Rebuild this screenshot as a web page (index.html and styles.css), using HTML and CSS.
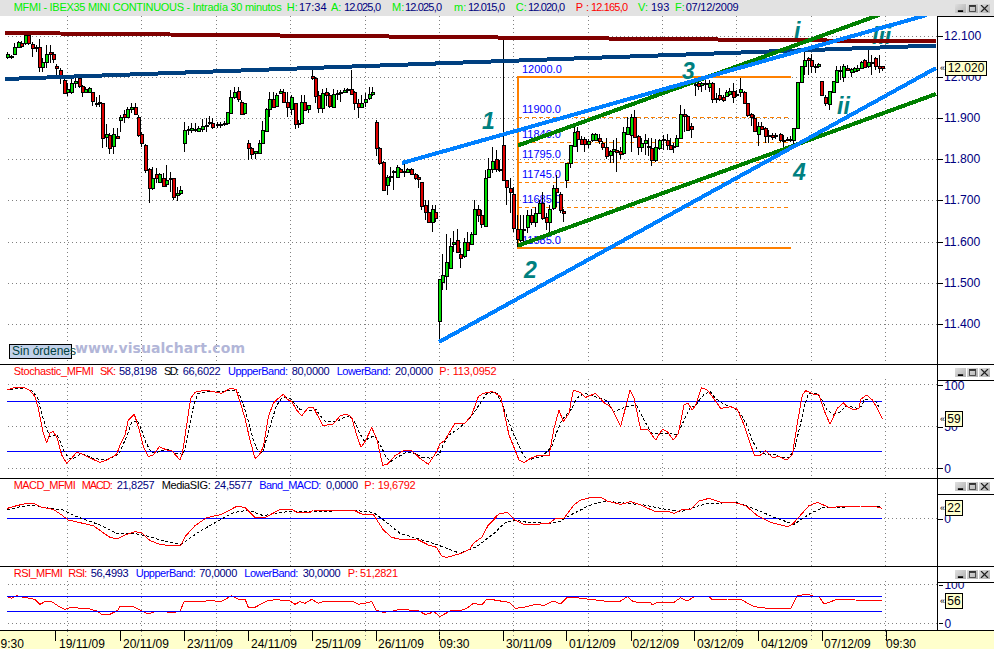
FILE: index.html
```html
<!DOCTYPE html>
<html lang="es">
<head>
<meta charset="utf-8">
<title>MFMI - IBEX35 MINI CONTINUOUS</title>
<link rel="stylesheet" href="styles.css">
</head>
<body>
<svg class="defs" width="0" height="0">
  <symbol id="i-min" viewBox="0 0 10 8"><rect x="2" y="6" width="6" height="2" fill="#000"/></symbol>
  <symbol id="i-max" viewBox="0 0 10 8"><path d="M1.5 1.5h7v6h-7z" fill="none" stroke="#333"/><rect x="1" y="0" width="8" height="2" fill="#333"/></symbol>
  <symbol id="i-close" viewBox="0 0 10 8"><path d="M1 0l8 8M9 0L1 8" stroke="#222" stroke-width="1.4" fill="none"/></symbol>
</svg>
<div class="window">

  <header class="titlebar">
    <svg class="titletext" width="950" height="16" viewBox="0 0 950 16">
      <text class="t11 c-lime" x="13.7" y="11" textLength="268">MFMI - IBEX35 MINI CONTINUOUS - Intradía 30 minutos</text>
      <text class="t11 c-lime" x="286.7" y="11">H:</text><text class="t11 c-navy" x="299" y="11">17:34</text>
      <text class="t11 c-lime" x="331" y="11">A:</text><text class="t11 c-navy" x="344" y="11" textLength="37">12.025,0</text>
      <text class="t11 c-lime" x="392" y="11">M:</text><text class="t11 c-navy" x="405" y="11" textLength="37">12.025,0</text>
      <text class="t11 c-lime" x="454" y="11">m:</text><text class="t11 c-navy" x="468" y="11" textLength="37">12.015,0</text>
      <text class="t11 c-lime" x="515.7" y="11">C:</text><text class="t11 c-navy" x="528" y="11" textLength="37">12.020,0</text>
      <text class="t11 c-red" x="575.7" y="11">P :</text><text class="t11 c-red" x="591" y="11" textLength="37">12.165,0</text>
      <text class="t11 c-lime" x="638" y="11">V:</text><text class="t11 c-navy" x="651" y="11">193</text>
      <text class="t11 c-lime" x="675" y="11">F:</text><text class="t11 c-navy" x="685.7" y="11" textLength="53">07/12/2009</text>
    </svg>
    <div class="wbs">
      <span class="wb"><svg class="ico"><use href="#i-min"/></svg></span>
      <span class="wb"><svg class="ico"><use href="#i-max"/></svg></span>
      <span class="wb"><svg class="ico"><use href="#i-close"/></svg></span>
    </div>
  </header>

  <section class="panel p-main">
    <svg class="plot" width="937" height="348" viewBox="0 16 937 348">
      <g id="grid-main"></g>
      <g id="fibo"></g>
      <g class="fibo-labels">
        <text x="522" y="72.5">12000.0</text>
        <text x="522" y="113.3">11900.0</text>
        <text x="522" y="138.3">11840.0</text>
        <text x="522" y="158.3">11795.0</text>
        <text x="522" y="178">11745.0</text>
        <text x="522" y="202.7">11685.0</text>
        <text x="522" y="244">11585.0</text>
      </g>
      <g id="candles"></g>
      <g class="waves">
        <text x="482" y="129">1</text>
        <text x="524" y="278">2</text>
        <text x="682" y="79">3</text>
        <text x="793" y="180">4</text>
        <text x="794" y="39">i</text>
        <text x="837" y="114">ii</text>
        <text x="872" y="44">iii</text>
      </g>
      <g id="trends"></g>
      <text class="watermark" x="75" y="353" textLength="170">www.visualchart.com</text>
    </svg>
    <div class="status">Sin órdenes</div>
    <aside class="axis axis-main">
      <svg class="scale" width="56" height="348" viewBox="938 17 56 347">
        <g class="scale-labels">
          <text x="944" y="40">12.100</text>
          <text x="944" y="81">12.000</text>
          <text x="944" y="122">11.900</text>
          <text x="944" y="163">11.800</text>
          <text x="944" y="204">11.700</text>
          <text x="944" y="246">11.600</text>
          <text x="944" y="287">11.500</text>
          <text x="944" y="328">11.400</text>
        </g>
        <g id="ticks-main"></g>
      </svg>
      <div class="tag tag-main"><i>«</i><b>12.020</b></div>
    </aside>
  </section>

  <section class="panel p-stoch">
    <svg class="plot" width="937" height="113" viewBox="0 365 937 113">
      <g id="grid-stoch"></g>
      <g id="lines-stoch"></g>
      <g class="t11">
        <text class="c-red" x="13.7" y="375" textLength="80">Stochastic_MFMI</text>
        <text class="c-red" x="100" y="375" textLength="16">SK:</text><text class="c-navy" x="119" y="375" textLength="38">58,8198</text>
        <text class="c-black" x="164" y="375" textLength="15">SD:</text><text class="c-navy" x="182.7" y="375" textLength="38">66,6022</text>
        <text class="c-blue" x="228" y="375" textLength="60">UppperBand:</text><text class="c-navy" x="291.7" y="375" textLength="38">80,0000</text>
        <text class="c-blue" x="336.7" y="375" textLength="54">LowerBand:</text><text class="c-navy" x="395" y="375" textLength="38">20,0000</text>
        <text class="c-red" x="439.3" y="375">P:</text><text class="c-red" x="452.7" y="375" textLength="44">113,0952</text>
      </g>
    </svg>
    <aside class="axis axis-sub">
      <div class="wbs">
        <span class="wb"><svg class="ico"><use href="#i-min"/></svg></span>
        <span class="wb"><svg class="ico"><use href="#i-max"/></svg></span>
        <span class="wb"><svg class="ico"><use href="#i-close"/></svg></span>
      </div>
      <svg class="scale" width="56" height="98" viewBox="938 380 56 98">
        <g class="scale-labels">
          <text x="944" y="389">100</text>
          <text x="944" y="430.5">50</text>
          <text x="944" y="472.5">0</text>
        </g>
        <g id="ticks-stoch"></g>
      </svg>
      <div class="tag tag-stoch"><i>«</i><b>59</b></div>
    </aside>
  </section>

  <section class="panel p-macd">
    <svg class="plot" width="937" height="87" viewBox="0 479 937 87">
      <g id="grid-macd"></g>
      <g id="lines-macd"></g>
      <g class="t11">
        <text class="c-red" x="13.7" y="489" textLength="62">MACD_MFMI</text>
        <text class="c-red" x="81.7" y="489" textLength="31">MACD:</text><text class="c-navy" x="116.7" y="489" textLength="38">21,8257</text>
        <text class="c-black" x="161.7" y="489" textLength="49">MediaSIG:</text><text class="c-navy" x="214.3" y="489" textLength="38">24,5577</text>
        <text class="c-blue" x="259.3" y="489" textLength="62">Band_MACD:</text><text class="c-navy" x="326" y="489" textLength="32">0,0000</text>
        <text class="c-red" x="364.3" y="489">P:</text><text class="c-red" x="377.7" y="489" textLength="38">19,6792</text>
      </g>
    </svg>
    <aside class="axis axis-sub">
      <div class="wbs">
        <span class="wb"><svg class="ico"><use href="#i-min"/></svg></span>
        <span class="wb"><svg class="ico"><use href="#i-max"/></svg></span>
        <span class="wb"><svg class="ico"><use href="#i-close"/></svg></span>
      </div>
      <svg class="scale" width="56" height="72" viewBox="938 494 56 72">
        <g class="scale-labels">
          <text x="944" y="522.5">0</text>
        </g>
        <g id="ticks-macd"></g>
      </svg>
      <div class="tag tag-macd"><i>«</i><b>22</b></div>
    </aside>
  </section>

  <section class="panel p-rsi">
    <svg class="plot" width="937" height="63" viewBox="0 567 937 63">
      <g id="grid-rsi"></g>
      <g id="lines-rsi"></g>
      <g class="t11">
        <text class="c-red" x="13.7" y="577" textLength="49">RSI_MFMI</text>
        <text class="c-red" x="68.3" y="577" textLength="19">RSI:</text><text class="c-navy" x="90.7" y="577" textLength="38">56,4993</text>
        <text class="c-blue" x="135.7" y="577" textLength="60">UppperBand:</text><text class="c-navy" x="199.3" y="577" textLength="38">70,0000</text>
        <text class="c-blue" x="244.3" y="577" textLength="54">LowerBand:</text><text class="c-navy" x="302.7" y="577" textLength="38">30,0000</text>
        <text class="c-red" x="347.7" y="577">P:</text><text class="c-red" x="360" y="577" textLength="38">51,2821</text>
      </g>
    </svg>
    <aside class="axis axis-sub">
      <div class="wbs">
        <span class="wb"><svg class="ico"><use href="#i-min"/></svg></span>
        <span class="wb"><svg class="ico"><use href="#i-max"/></svg></span>
        <span class="wb"><svg class="ico"><use href="#i-close"/></svg></span>
      </div>
      <svg class="scale" width="56" height="48" viewBox="938 582 56 48">
        <g class="scale-labels">
          <text x="944" y="588.5">100</text>
          <text x="944" y="627.5">0</text>
        </g>
        <g id="ticks-rsi"></g>
      </svg>
      <div class="tag tag-rsi"><i>«</i><b>56</b></div>
    </aside>
  </section>

  <footer class="dates">
    <svg width="994" height="18" viewBox="0 631 994 18">
      <g id="date-ticks"></g>
      <g class="date-labels">
        <text x="0.5" y="647.5">9:30</text>
        <text x="59" y="647.5">19/11/09</text>
        <text x="123" y="647.5">20/11/09</text>
        <text x="187" y="647.5">23/11/09</text>
        <text x="251" y="647.5">24/11/09</text>
        <text x="315" y="647.5">25/11/09</text>
        <text x="378" y="647.5">26/11/09</text>
        <text x="439.5" y="647.5">09:30</text>
        <text x="506" y="647.5">30/11/09</text>
        <text x="569" y="647.5">01/12/09</text>
        <text x="632.5" y="647.5">02/12/09</text>
        <text x="697" y="647.5">03/12/09</text>
        <text x="761" y="647.5">04/12/09</text>
        <text x="824" y="647.5">07/12/09</text>
        <text x="886" y="647.5">09:30</text>
      </g>
    </svg>
  </footer>
</div>
<script src="chart.js"></script>
</body>
</html>
```

FILE: styles.css
```css
* { box-sizing: border-box; }
html, body { margin: 0; padding: 0; background: #fff; }
body { width: 994px; height: 649px; overflow: hidden; font-family: "Liberation Sans", Arial, sans-serif; }
svg { display: block; }
.defs { position: absolute; }

.window { display: flex; flex-direction: column; width: 994px; height: 649px; }

.titlebar { display: flex; justify-content: space-between; align-items: flex-start; height: 16px; background: #e2e2e2; flex: none; }
.wbs { display: flex; gap: 1px; padding: 4px 4px 0 0; justify-content: flex-end; }
.wb { width: 11px; height: 9px; background: linear-gradient(135deg, #e0e0e0, #b0b0b0); }
.ico { width: 11px; height: 9px; padding: 1px; }

.panel { display: flex; position: relative; flex: none; border-bottom: 1px solid #000; }
.p-main { height: 349px; }
.p-stoch { height: 114px; }
.p-macd { height: 88px; }
.p-rsi { height: 64px; }
.plot { flex: none; }

.axis { position: relative; width: 57px; flex: none; border-left: 1px solid #000; display: flex; flex-direction: column; }
.axis-main { border-top: 1px solid #000; }
.axis-sub .wbs { padding-top: 3px; height: 15px; }
.axis-sub .scale { border-top: 1px solid #000; flex: 1; }
.scale { overflow: hidden; }
.scale-labels text { font-size: 12.2px; fill: #000080; }

.tag { position: absolute; display: flex; align-items: center; }
.tag i { position: absolute; left: -5px; font-style: normal; font-size: 9px; line-height: 9px; color: #000; }
.tag b { display: block; height: 15px; line-height: 13px; background: #ffffcc; border: 1px solid #000; font-weight: normal; font-size: 12px; color: #000; text-align: center; }
.tag-main { left: 7px; top: 44px; }
.tag-main b { width: 42px; }
.tag-stoch { left: 7px; top: 46px; }
.tag-macd { left: 7px; top: 21px; }
.tag-rsi { left: 7px; top: 26px; }
.tag-stoch b, .tag-macd b, .tag-rsi b { width: 18px; height: 16px; line-height: 14px; }

.status { position: absolute; left: 9px; top: 328px; width: 63px; height: 15px; line-height: 13px; padding-left: 2px; background: #c2d2ea; border: 1px solid #000; color: #004040; font-size: 12px; white-space: nowrap; }

.dates { height: 18px; flex: none; background: #ffffcc; overflow: hidden; }
.date-labels text { font-size: 12px; fill: #000; }

.t11, .t11 text { font-size: 11px; }
.c-lime { fill: #00ee00; }
.c-navy { fill: #000080; }
.c-red { fill: #ff0000; }
.c-blue { fill: #0000ff; }
.c-black { fill: #000; }

.fibo-labels text { font-size: 11px; fill: #0000ff; }
.waves text { font-size: 23px; font-weight: bold; font-style: italic; fill: #008080; }
.watermark { font-family: "DejaVu Sans", sans-serif; font-size: 14px; font-weight: bold; fill: #b2b6d8; }

.grid { stroke: #808080; stroke-width: 1; stroke-dasharray: 1 3; shape-rendering: crispEdges; }
.tick { stroke: #000; stroke-width: 1; shape-rendering: crispEdges; }
.wick { stroke: #000; stroke-width: 1; shape-rendering: crispEdges; }
.body { stroke: #000; stroke-width: 1; shape-rendering: crispEdges; }
.up { fill: #00dd00; }
.down { fill: #e00000; }
.trend { fill: none; stroke-width: 4; shape-rendering: crispEdges; }
.maroon { stroke: #800000; }
.steel { stroke: #004080; }
.sky { stroke: #0080ff; }
.forest { stroke: #008000; }
.or-solid { stroke: #ff8000; stroke-width: 2; fill: none; shape-rendering: crispEdges; }
.or-dash { stroke: #ff8000; stroke-width: 1; stroke-dasharray: 4 3; shape-rendering: crispEdges; }
.band { stroke: #0000ff; stroke-width: 1; shape-rendering: crispEdges; }
.sig-red { fill: none; stroke: #ff0000; stroke-width: 1; stroke-linejoin: round; shape-rendering: crispEdges; }
.sig-dash { fill: none; stroke: #000; stroke-width: 1; stroke-dasharray: 3 2; shape-rendering: crispEdges; }
```

FILE: chart.js
```js
var NS = 'http://www.w3.org/2000/svg';
function el(parent, name, attrs) {
  var n = document.createElementNS(NS, name);
  for (var k in attrs) n.setAttribute(k, attrs[k]);
  document.getElementById(parent).appendChild(n);
  return n;
}
function line(parent, cls, x1, y1, x2, y2) {
  el(parent, 'line', { 'class': cls, x1: x1, y1: y1, x2: x2, y2: y2 });
}
function poly(parent, cls, pts) {
  el(parent, 'polyline', { 'class': cls, points: pts.map(function (p) { return p[0] + ',' + p[1]; }).join(' ') });
}
/* The curves were read at 3x: a left run and a right run that starts at page x=494. */
function curve(left, right, yOffset) {
  var out = [];
  function add(arr, dx) {
    for (var i = 0; i < arr.length; i += 2) out.push([dx + arr[i] / 3, yOffset + arr[i + 1] / 3]);
  }
  add(left, 0);
  add(right, 494);
  return out;
}

/* ---- grids ---- */
var VX = [67, 141, 216, 290, 365, 439, 513, 588, 662, 736, 811, 885];
function grid(id, top, bottom, rows) {
  VX.forEach(function (x) { line(id, 'grid', x + 0.5, top, x + 0.5, bottom); });
  rows.forEach(function (y) { line(id, 'grid', 8, y + 0.5, 937, y + 0.5); });
}
var priceRows = [36, 77, 118, 159, 200, 242, 283, 324];
grid('grid-main', 16, 364, priceRows);
grid('grid-stoch', 379, 478, [384, 426, 468]);
grid('grid-macd', 493, 566, [518]);
grid('grid-rsi', 581, 630, [584, 623]);
function ticks(id, rows) { rows.forEach(function (y) { line(id, 'tick', 938, y + 0.5, 943, y + 0.5); }); }
ticks('ticks-main', priceRows);
ticks('ticks-stoch', [384, 426, 468]);
ticks('ticks-macd', [518]);
ticks('ticks-rsi', [584, 623]);

/* ---- candles: x, wickTop, bodyTop, bodyBottom, wickBottom, colour (3x page coordinates) ---- */
var left = [
[22,155,163,170,178,'u'],[33,165,169,172,176,'u'],[43,130,141,163,165,'u'],[53,122,125,141,143,'u'],[64,122,128,137,143,'d'],
[74,100,105,130,135,'u'],[85,100,105,130,135,'d'],[97,125,131,143,170,'d'],[107,135,140,143,155,'u'],[118,118,141,200,215,'d'],
[127,175,187,200,215,'u'],[139,135,163,187,205,'u'],[149,135,157,163,190,'d'],[160,155,161,176,188,'d'],[169,193,199,205,225,'d'],
[181,205,210,235,252,'d'],[191,230,240,280,282,'d'],[202,250,268,275,287,'u'],[214,235,250,275,283,'u'],[224,222,243,250,265,'u'],
[236,228,234,257,263,'d'],[246,255,258,275,292,'d'],[256,262,266,275,278,'u'],[266,260,263,275,280,'u'],[277,275,275,304,318,'d'],
[287,290,309,312,322,'u'],[297,285,305,308,320,'u'],[307,310,310,415,445,'d'],[319,372,403,410,440,'u'],[328,400,405,443,462,'d'],
[340,385,403,437,462,'u'],[351,385,408,415,418,'d'],[361,345,350,361,395,'u'],[373,330,343,350,368,'d'],[382,322,328,350,352,'u'],
[393,310,322,328,340,'u'],[404,310,320,343,345,'d'],[415,345,350,405,410,'d'],[424,395,403,430,440,'d'],[436,432,435,510,520,'d'],
[446,505,508,565,610,'d'],[457,500,535,565,571,'u'],[467,505,523,535,550,'d'],[478,520,523,545,548,'u'],[490,520,535,558,560,'d'],
[499,495,540,552,560,'u'],[510,515,533,536,575,'u'],[519,533,535,590,600,'d'],[532,560,578,584,602,'u'],[541,558,570,578,585,'u'],
[553,365,390,430,455,'u'],[563,378,387,390,405,'u'],[574,368,385,390,400,'u'],[585,368,387,390,395,'u'],[595,378,385,392,393,'u'],
[606,358,378,386,395,'u'],[617,355,375,378,395,'u'],[627,348,367,370,375,'u'],[637,355,368,380,388,'d'],[650,365,371,374,385,'u'],
[660,365,371,374,385,'u'],[671,362,368,373,378,'u'],[680,337,337,370,375,'u'],[691,270,292,338,340,'u'],[702,262,276,292,298,'u'],
[713,262,272,298,305,'d'],[724,300,305,343,345,'d'],[733,308,310,340,345,'u'],
[745,420,430,443,480,'d'],[754,440,443,462,478,'d'],[766,452,452,460,478,'u'],[776,420,430,460,462,'u'],[787,362,390,430,432,'u'],
[797,325,327,392,395,'u'],[808,275,298,327,350,'u'],[818,275,298,320,325,'d'],[829,280,285,317,318,'u'],[840,268,274,280,282,'u'],
[850,268,275,305,308,'d'],[862,277,305,322,350,'d'],[872,285,292,328,345,'u'],[884,310,310,373,388,'d'],[893,360,370,373,385,'u'],
[904,285,305,368,372,'u'],[913,285,305,330,332,'d'],[925,316,316,328,338,'u'],
[935,205,228,235,240,'d'],[946,232,235,287,310,'d'],[955,272,285,323,338,'d'],[967,268,280,323,338,'u'],[977,265,275,285,318,'d'],
[988,280,285,318,325,'d'],[1000,268,281,322,325,'u'],[1010,270,278,281,300,'u'],[1021,270,275,280,305,'u'],[1032,265,270,276,280,'u'],
[1042,265,267,270,280,'u'],[1052,210,268,282,285,'d'],[1063,272,275,310,330,'d'],[1073,298,310,322,355,'d'],[1084,285,310,322,325,'u'],
[1096,278,298,305,322,'u'],[1106,262,281,293,300,'u'],[1117,262,275,282,287,'u'],
[1127,360,367,443,468,'d'],[1138,440,443,490,495,'d'],[1148,482,485,570,555,'d'],[1160,525,530,555,585,'u'],[1170,500,528,531,545,'u'],
[1180,510,514,517,570,'u'],[1190,495,500,530,535,'u'],[1201,505,508,515,520,'d'],[1212,490,513,516,530,'u'],[1222,505,508,515,520,'u'],
[1234,505,508,523,525,'d'],[1245,518,522,535,540,'d'],[1255,525,530,536,565,'d'],
[1264,546,546,617,630,'d'],[1275,600,615,635,660,'d'],[1285,600,635,665,665,'d'],[1297,615,628,665,695,'u'],[1306,615,635,653,665,'d'],
[1318,838,838,962,1025,'u'],[1327,762,826,845,870,'u'],[1339,703,787,827,870,'u'],[1351,715,739,803,805,'u'],[1360,692,727,733,755,'u'],
[1372,688,721,757,760,'d'],[1381,745,763,775,803,'d'],[1393,715,727,769,775,'u'],[1402,695,727,751,752,'d'],[1414,695,703,733,735,'u'],
[1423,600,628,703,705,'u'],[1435,615,628,646,665,'d'],
[1444,630,645,673,685,'d'],[1456,510,535,677,677,'u'],[1465,475,508,530,535,'u'],[1477,440,483,508,520,'u'],[1488,450,478,508,515,'d'],
[1498,480,506,509,515,'u'],[1510,110,435,540,540,'d'],[1518,540,540,560,615,'d'],[1530,535,565,577,640,'d'],[1540,560,582,685,695,'d'],
[1552,645,687,718,740,'d'],[1561,645,687,720,725,'u'],[1570,645,686,689,730,'u'],[1582,630,645,682,700,'u'],[1594,628,645,665,675,'d'],
[1606,620,640,665,680,'u'],[1616,600,610,640,640,'u'],[1627,575,608,653,660,'d'],[1637,640,652,665,690,'d'],[1648,615,627,665,705,'u'],
[1658,555,565,623,630,'u'],[1669,525,565,577,620,'d'],[1679,577,583,630,640,'d'],[1690,628,633,640,665,'d']
];
var right = [
[217,488,490,540,565,'u'],[229,435,435,490,505,'u'],[240,375,397,437,440,'u'],[250,380,393,418,455,'d'],[261,408,416,432,432,'d'],
[271,410,416,433,455,'d'],[283,418,422,432,445,'u'],[293,400,402,420,425,'u'],[304,400,402,420,423,'u'],[314,402,415,422,432,'d'],
[325,422,428,442,450,'d'],[336,415,440,468,478,'d'],[347,450,452,466,490,'u'],[357,420,448,454,490,'u'],[367,415,450,455,515,'d'],
[378,440,452,462,478,'d'],[388,380,396,460,465,'u'],[400,350,380,403,405,'u'],[410,342,350,405,455,'u'],[420,330,350,410,415,'d'],
[431,405,407,442,465,'d'],[442,415,430,442,455,'u'],[453,402,420,430,465,'u'],[463,415,438,441,468,'u'],[472,415,443,480,497,'d'],
[484,418,440,480,485,'u'],[494,418,420,443,450,'u'],[506,405,416,419,450,'u'],[518,403,420,436,450,'d'],[527,415,436,448,450,'d'],
[537,430,438,442,460,'u'],[547,405,415,437,440,'u'],[558,315,343,415,418,'u'],[569,328,343,348,395,'d'],[579,345,348,390,392,'d'],
[590,370,378,387,415,'d'],
[603,240,252,255,288,'u'],[612,240,250,257,270,'d'],[622,245,250,256,275,'u'],[632,230,249,252,270,'u'],[644,240,250,262,275,'u'],
[655,247,250,298,310,'d'],[665,280,294,297,310,'u'],[675,265,286,298,302,'d'],[686,285,290,300,305,'d'],[697,270,275,288,290,'u'],
[706,265,273,282,288,'u'],[717,250,273,292,310,'d'],[727,270,282,285,290,'u'],[739,235,267,275,290,'u'],[749,272,275,310,312,'d'],
[760,308,310,345,352,'d'],[771,340,343,352,378,'d'],[781,345,355,392,392,'d'],[792,365,378,403,438,'u'],[802,365,378,387,390,'d'],
[813,382,385,408,428,'d'],[823,390,404,407,430,'u'],[834,400,405,410,420,'d'],[844,398,404,407,418,'u'],[857,400,402,420,425,'d'],
[867,405,419,422,445,'u'],[878,412,417,420,422,'u'],[888,408,417,420,425,'u'],[898,385,385,420,438,'u'],[910,245,245,385,387,'u'],
[920,197,199,245,247,'u'],[931,155,181,199,226,'u'],[941,170,175,181,225,'d'],[952,162,181,199,220,'d'],[963,192,198,201,218,'u'],
[973,190,193,199,205,'u'],
[982,243,243,286,288,'d'],[994,285,290,310,318,'d'],[1005,272,272,312,330,'u'],[1016,243,243,275,277,'u'],[1027,199,211,245,248,'u'],
[1037,199,210,213,240,'u'],[1048,192,199,232,245,'u'],[1058,195,203,211,213,'d'],[1070,205,208,216,230,'u'],[1080,200,205,213,220,'u'],
[1090,195,203,211,217,'u'],[1100,182,187,203,205,'u'],[1111,178,181,200,205,'d'],[1121,142,187,199,205,'u'],[1132,165,186,189,225,'u'],
[1144,172,175,199,210,'d'],[1155,165,199,205,218,'d'],[1165,199,199,205,213,'d']
];
function candle(x3, c) {
  var X = Math.round(x3 / 3);
  var bt = Math.round(c[2] / 3), bb = Math.round(c[3] / 3);
  if (bb <= bt) bb = bt + 1;
  line('candles', 'wick', X + 0.5, Math.round(c[1] / 3), X + 0.5, Math.max(Math.round(c[4] / 3), bb));
  el('candles', 'rect', { 'class': 'body ' + (c[5] === 'u' ? 'up' : 'down'), x: X - 0.5, y: bt + 0.5, width: 3, height: bb - bt });
}
left.forEach(function (c) { candle(c[0], c); });
right.forEach(function (c) { candle(1482 + c[0], c); });

/* ---- retracement levels ---- */
poly('fibo', 'or-solid', [[791, 76.5], [517.5, 76.5], [517.5, 247.5], [791, 247.5]]);
[117, 142, 162, 182, 207].forEach(function (y) { line('fibo', 'or-dash', 518, y + 0.5, 791, y + 0.5); });

/* ---- trend lines ---- */
line('trends', 'trend maroon', 5, 33, 936, 41.5);
line('trends', 'trend steel', 5, 79, 936, 45.5);
line('trends', 'trend forest', 518, 145.5, 879, 15);
line('trends', 'trend forest', 518, 245.7, 936, 94);
line('trends', 'trend sky', 402, 163, 927, 15);
line('trends', 'trend sky', 439, 342, 936, 68);

/* ---- Stochastic ---- */
var stochRed = curve(
[22,90,40,84,70,82,90,92,105,110,115,145,130,220,140,248,150,218,160,215,172,235,185,285,200,310,215,295,230,276,245,282,265,292,300,307,320,300,350,283,360,255,375,225,385,180,403,163,415,200,430,260,445,290,460,285,478,260,500,270,515,272,540,300,548,275,560,195,572,115,585,97,615,90,640,95,665,100,690,85,708,88,720,125,735,175,750,240,765,295,778,285,790,260,805,170,820,130,835,115,850,103,862,118,875,125,890,150,905,168,925,142,940,142,952,165,968,197,1000,192,1020,168,1040,162,1055,172,1070,225,1083,262,1098,240,1115,203,1130,235,1148,316,1162,313,1185,287,1210,272,1235,272,1260,295,1285,313,1310,275,1320,252,1335,240,1365,190,1395,190,1415,165,1435,110,1450,100,1475,95],
[0,97,20,110,45,225,75,300,90,308,110,295,135,285,165,288,180,205,195,150,208,185,225,160,238,90,260,98,275,112,305,100,330,128,350,140,380,200,408,90,420,115,440,208,463,210,485,240,505,208,520,215,538,240,553,220,570,135,582,130,595,150,605,135,622,83,640,90,655,110,680,145,710,140,730,148,748,190,765,240,782,288,800,285,815,272,835,292,855,290,878,300,895,285,910,190,925,105,935,92,960,103,975,105,990,150,1008,193,1030,145,1048,128,1060,140,1080,150,1095,145,1100,118,1118,105,1135,120,1150,145,1165,177],
360);
var stochDash = stochRed.map(function (p, i, a) {
  var prev = a[Math.max(0, i - 1)], next = a[Math.min(a.length - 1, i + 1)];
  return [p[0] + 3, (prev[1] + p[1] + next[1]) / 3];
});
stochDash.pop();
line('lines-stoch', 'band', 7, 401.5, 882, 401.5);
line('lines-stoch', 'band', 7, 451.5, 882, 451.5);
poly('lines-stoch', 'sig-dash', stochDash);
poly('lines-stoch', 'sig-red', stochRed);

/* ---- MACD ---- */
var macdRed = curve(
[22,100,50,92,80,85,100,85,125,97,160,103,185,120,205,135,240,143,280,152,305,170,330,187,350,192,375,180,405,170,425,173,450,197,480,208,510,212,542,212,555,185,585,152,620,128,665,118,690,105,710,94,735,97,765,127,795,128,840,103,875,103,890,112,930,112,940,105,1000,108,1060,105,1085,117,1120,118,1150,165,1175,187,1200,193,1250,192,1285,210,1310,217,1325,243,1340,247,1385,235,1410,222,1420,205,1445,187,1465,150,1490,125],
[0,130,15,117,40,112,60,133,90,148,125,148,165,145,185,130,210,130,240,90,260,75,295,67,320,67,340,78,380,88,410,80,440,90,480,108,520,108,540,115,565,103,590,103,615,78,645,70,680,82,720,82,755,92,790,122,830,142,880,155,895,148,920,120,945,92,970,82,1005,97,1050,95,1100,93,1140,93,1163,100],
475);
var macdDash = curve(
[22,105,60,95,100,90,130,97,190,105,230,125,300,150,350,175,400,175,440,183,500,200,545,208,590,175,650,140,700,113,745,105,790,122,840,112,900,108,1000,108,1070,107,1120,112,1150,135,1200,175,1300,205,1380,235,1430,215],
[0,175,30,145,60,135,100,142,165,145,200,138,230,120,285,92,330,78,400,85,450,90,510,102,560,110,590,100,640,85,730,83,790,105,840,127,900,148,950,115,990,97,1040,97,1090,93,1160,95],
475);
line('lines-macd', 'band', 7, 518.5, 882, 518.5);
poly('lines-macd', 'sig-dash', macdDash);
poly('lines-macd', 'sig-red', macdRed);

/* ---- RSI (the bands lie over the curve) ---- */
var rsiRed = curve(
[22,365,35,370,50,362,65,366,80,368,105,373,120,388,135,380,155,380,175,393,195,403,215,397,245,400,270,402,290,408,305,418,330,418,355,405,360,393,395,393,425,408,445,417,465,410,490,410,520,413,540,408,553,379,610,379,625,377,665,379,695,362,715,372,735,372,745,397,765,397,800,378,830,373,850,377,865,375,885,388,900,380,915,385,935,373,955,385,970,380,1000,380,1060,380,1075,388,1095,385,1115,380,1128,405,1150,412,1180,408,1200,403,1255,407,1275,418,1290,415,1300,408,1320,425,1355,405,1380,407,1400,400,1420,385,1445,390,1460,373,1485,373],
[0,375,45,382,65,400,90,397,130,387,150,392,178,378,200,387,220,367,240,367,280,372,330,378,380,378,400,365,415,378,430,382,470,382,475,390,490,382,540,382,560,368,580,378,600,365,645,365,655,375,700,372,740,373,780,395,820,400,890,400,910,362,940,358,965,365,975,365,990,387,1030,373,1165,378],
475);
poly('lines-rsi', 'sig-red', rsiRed);
line('lines-rsi', 'band', 7, 596.5, 882, 596.5);
line('lines-rsi', 'band', 7, 611.5, 882, 611.5);

/* ---- date axis ---- */
[55, 120, 184, 248, 312, 376, 439, 503, 566, 631, 694, 758, 822, 886].forEach(function (x) {
  line('date-ticks', 'tick', x + 0.5, 631, x + 0.5, 641);
});
VX.forEach(function (x) { line('date-ticks', 'grid', x + 0.5, 631, x + 0.5, 640); });
```
